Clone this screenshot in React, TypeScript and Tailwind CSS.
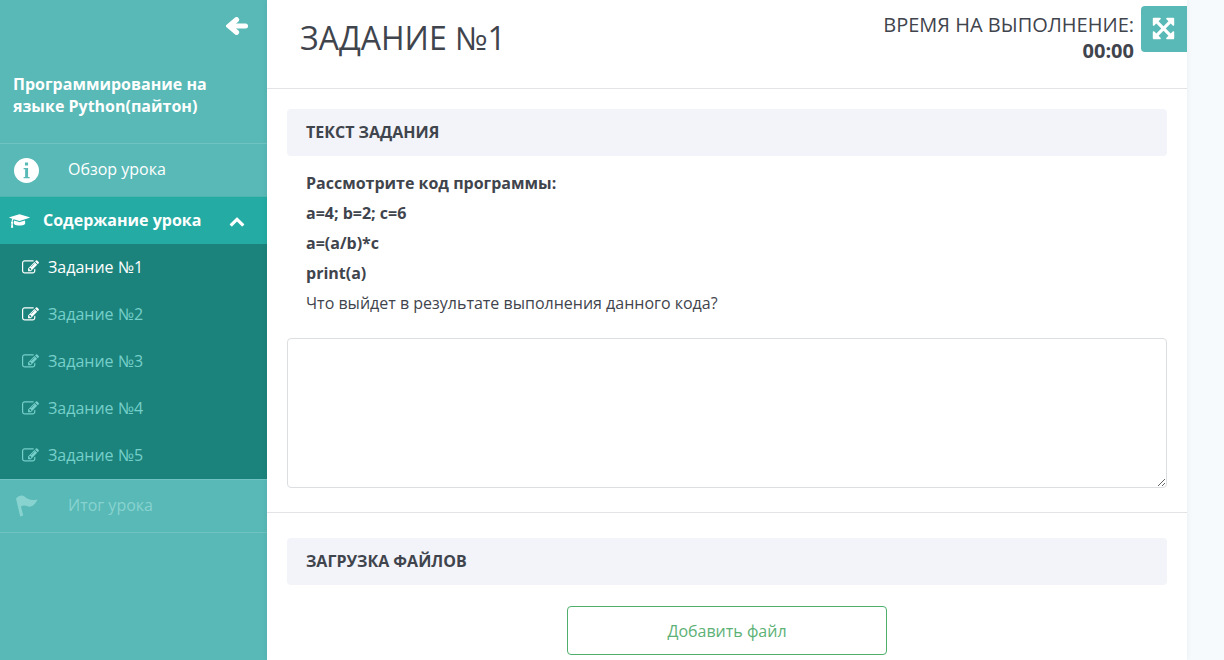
import type { ReactNode } from "react";

type IconProps = { className?: string };

const EDIT =
  "M888 1184l116-116-152-152-116 116v56h96v96h56zm440-720q-16-16-33 1l-350 350q-17 17-1 33t33-1l350-350q17-17 1-33zm80 594v190q0 119-84.5 203.5t-203.5 84.5h-832q-119 0-203.5-84.5t-84.5-203.5v-832q0-119 84.5-203.5t203.5-84.5h832q63 0 117 25 15 7 18 23 3 17-9 29l-49 49q-14 14-32 8-23-6-45-6h-832q-66 0-113 47t-47 113v832q0 66 47 113t113 47h832q66 0 113-47t47-113v-126q0-13 9-22l64-64q15-15 35-7t20 29zm-96-738l288 288-672 672h-288v-288zm444 132l-92 92-288-288 92-92q28-28 68-28t68 28l152 152q28 28 28 68t-28 68z";
const CAP =
  "M1774 836l18 316q4 69-82 128t-235 93.5-323 34.5-323-34.5-235-93.5-82-128l18-316 574 181q22 7 48 7t48-7zm530-324q0 23-22 31l-1120 352q-4 1-10 1t-10-1l-652-206q-43 34-71 111.5t-34 178.5q63 36 63 109 0 69-58 107l58 433q2 14-8 25-9 11-24 11h-192q-15 0-24-11-10-11-8-25l58-433q-58-38-58-107 0-73 65-111 11-207 98-330l-333-104q-22-8-22-31t22-31l1120-352q4-1 10-1t10 1l1120 352q22 8 22 31z";
const CHEVRON =
  "M1683 1331l-166 165q-19 19-45 19t-45-19l-531-531-531 531q-19 19-45 19t-45-19l-166-165q-19-19-19-45.5t19-45.5l742-741q19-19 45-19t45 19l742 741q19 19 19 45.5t-19 45.5z";
const EXPAND =
  "M1411 541l-355 355 355 355 144-144q29-31 70-14 39 17 39 59v448q0 26-19 45t-45 19h-448q-42 0-59-40-17-39 14-69l144-144-355-355-355 355 144 144q31 30 14 69-17 40-59 40h-448q-26 0-45-19t-19-45v-448q0-42 40-59 39-17 69 14l144 144 355-355-355-355-144 144q-19 19-45 19-12 0-24-5-40-17-40-59v-448q0-26 19-45t45-19h448q42 0 59 40 17 39-14 69l-144 144 355 355 355-355-144-144q-31-30-14-69 17-40 59-40h448q26 0 45 19t19 45v448q0 42-39 59-13 5-25 5-26 0-45-19z";

function Icon({ d, box = "0 0 1792 1792", className }: IconProps & { d: string; box?: string }) {
  return (
    <svg viewBox={box} className={className} fill="currentColor" aria-hidden="true">
      <path d={d} />
    </svg>
  );
}

function ArrowLeft({ className }: IconProps) {
  return (
    <svg viewBox="0 0 22 18" className={className} fill="none" stroke="currentColor" strokeLinecap="round" aria-hidden="true">
      <path d="M10.5 2.7 3.200 9l7.300 6.300" strokeWidth="5.200" strokeLinejoin="miter" />
      <path d="M5 9h14.500" strokeWidth="5" />
    </svg>
  );
}

function Info({ className }: IconProps) {
  return (
    <svg viewBox="0 0 24 24" className={className} aria-hidden="true">
      <circle cx="12" cy="12" r="12" fill="#fff" />
      <path fill="#58b9b6" d="M10.500 4.300h3v2.800h-3zM9.200 9.500h4.300v8.800h1.500v1.200H9.200v-1.200h1.500v-7.600H9.200z" />
    </svg>
  );
}

function Flag({ className }: IconProps) {
  return (
    <svg viewBox="0 0 22 22" className={className} fill="currentColor" aria-hidden="true">
      <path d="M0 3.500C2.500 1 5.500-.5 8.500 1.500c3.500 3 6.500 4.500 13 3-2 4.500-5.500 8-9 7-3-.8-5-2-7.500 0L7.200 20.500l-3 1z" />
    </svg>
  );
}

function PanelTitle({ children }: { children: ReactNode }) {
  return <h2 className="rounded bg-[#f3f4f9] px-[19px] pt-[11px] pb-3 text-base leading-6 font-bold uppercase">{children}</h2>;
}

function Label({ children, className = "" }: { children: ReactNode; className?: string }) {
  return <span className={`pb-0.5 ${className}`}>{children}</span>;
}

const tasks = [
  { name: "Задание №1", icon: "text-white", text: "text-white" },
  { name: "Задание №2", icon: "text-white", text: "text-[#76cfca]" },
  { name: "Задание №3", icon: "text-[#76cfca]", text: "text-[#76cfca]" },
  { name: "Задание №4", icon: "text-[#76cfca]", text: "text-[#76cfca]" },
  { name: "Задание №5", icon: "text-[#76cfca]", text: "text-[#76cfca]" },
];

function Sidebar() {
  return (
    <aside className="w-[267px] shrink-0 bg-[#58b9b6] text-base text-white">
      <div className="flex justify-end px-[19px] pt-[17px]">
        <button type="button" aria-label="Назад">
          <ArrowLeft className="h-[18px] w-[22px]" />
        </button>
      </div>
      <h2 className="px-[13px] pt-[38px] pb-[26px] leading-[22px] font-bold">Программирование на языке Python(пайтон)</h2>
      <nav>
        <a href="#overview" className="flex h-[53px] items-center border-t border-[#6fc4c1] pl-[14px]">
          <Info className="mr-[29px] size-[25px]" />
          <Label>Обзор урока</Label>
        </a>
        <button type="button" className="flex h-12 w-full items-center border-t border-[#4fb5b0] bg-[#24aba3] pl-[9px] font-bold">
          <Icon d={CAP} box="0 0 2304 1792" className="mr-[13px] h-4 w-[21px]" />
          <Label>Содержание урока</Label>
          <Icon d={CHEVRON} className="ml-7 size-4" />
        </button>
        <ul className="bg-[#1b837b]">
          {tasks.map((task) => (
            <li key={task.name}>
              <a href="#task" className="flex h-[47px] items-center gap-[9px] pl-[22px]">
                <Icon d={EDIT} className={`size-[17px] ${task.icon}`} />
                <Label className={task.text}>{task.name}</Label>
              </a>
            </li>
          ))}
        </ul>
        <a href="#summary" className="flex h-[54px] items-center border-y border-[#6fc4c1] pl-4 text-[#88d3d0]">
          <Flag className="mr-[30px] size-[22px]" />
          <Label>Итог урока</Label>
        </a>
      </nav>
    </aside>
  );
}

export default function App() {
  return (
    <div className="flex h-screen overflow-hidden bg-[#f6fafd] font-['Open_Sans',sans-serif] text-[#3f444d]">
      <Sidebar />
      <main className="mr-[37px] flex min-w-0 flex-1 flex-col bg-white shadow-[0_0_6px_rgba(0,0,0,0.06)]">
        <header className="flex h-[89px] shrink-0 items-start border-b border-[#e1e3e6]">
          <h1 className="flex-1 pt-4 pl-[33px] text-[32px] leading-[44px] uppercase">Задание №1</h1>
          <p className="pt-3 pr-[7px] text-right text-[20px] leading-[26px] uppercase">
            Время на выполнение:
            <br />
            <b className="font-bold">00:00</b>
          </p>
          <button type="button" aria-label="На весь экран" className="mt-[6px] flex size-[46px] items-center justify-center rounded-l bg-[#58b9b6] pr-px pb-px text-white">
            <Icon d={EXPAND} className="size-[25px]" />
          </button>
        </header>
        <section className="border-b border-[#e1e3e6] px-5 pt-5 pb-6">
          <PanelTitle>Текст задания</PanelTitle>
          <div className="px-[19px] pt-3 pb-5 text-base leading-[30px]">
            <div className="font-bold">
              <p>Рассмотрите код программы:</p>
              <p>a=4; b=2; c=6</p>
              <p>a=(a/b)*c</p>
              <p>print(a)</p>
            </div>
            <p>Что выйдет в результате выполнения данного кода?</p>
          </div>
          <textarea aria-label="Ответ" className="block h-[150px] w-full resize rounded border border-[#dcdfe2] bg-white p-3" />
        </section>
        <section className="flex flex-col px-5 pt-[25px]">
          <PanelTitle>Загрузка файлов</PanelTitle>
          <button type="button" className="mt-[21px] h-[49px] w-80 self-center rounded border border-[#4fae6c] text-base text-[#5cb176]">
            Добавить файл
          </button>
        </section>
      </main>
    </div>
  );
}
